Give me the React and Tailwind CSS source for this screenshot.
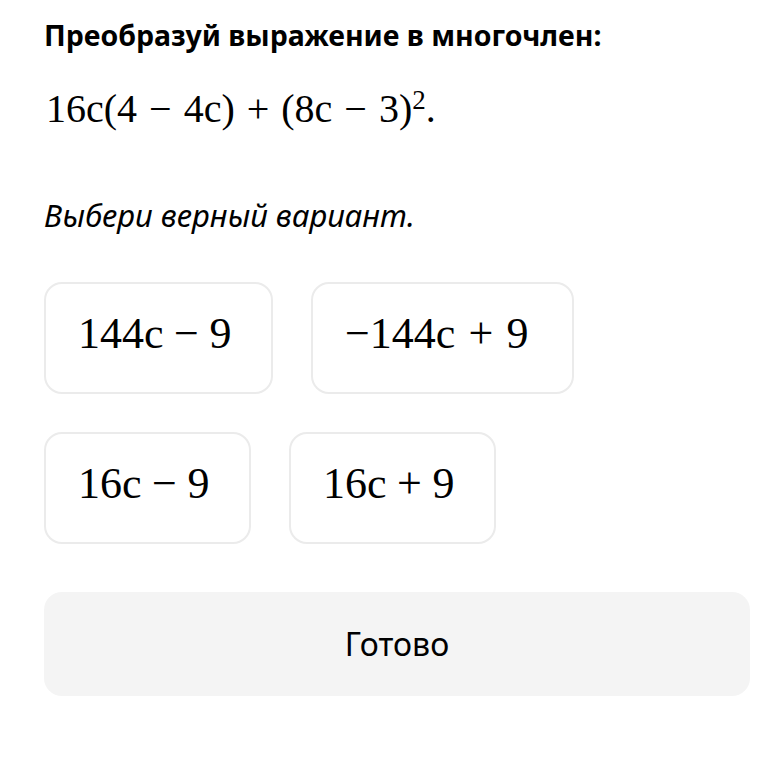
export default function App() {
  const sans = { fontFamily: '"Noto Sans", "Open Sans", sans-serif' };
  const math = { fontFamily: '"Liberation Serif", "DejaVu Serif", serif' };
  const Op = ({ c, m = "mx-[0.3em]" }) => <span className={m}>{c}</span>;
  const Card = ({ children, w }) => (
    <div className={`flex h-[112px] items-start rounded-[18px] border-2 border-[#ebebeb] bg-white pl-[32px] pt-[24px] ${w}`}>
      <span className="text-[44px] leading-[1.2] text-black" style={math}>{children}</span>
    </div>
  );
  return (
    <div className="min-h-[763px] w-[773px] bg-white text-black">
      <div className="px-[44px] pt-[17px]">
        <h1 className="text-[28.5px] font-bold leading-[1.3]" style={sans}>Преобразуй выражение в многочлен:</h1>
        <div className="mt-[29px] pl-[2px] text-[40px] leading-[1.3]" style={math}>
          16c(4<Op c="−" />4c)<Op c="+" />(8c<Op c="−" />3)<sup className="text-[27px] leading-none">2</sup>.
        </div>
        <p className="mt-[60px] text-[31px] italic leading-[1.3]" style={sans}>Выбери верный вариант.</p>
        <div className="mt-[47px] flex flex-col gap-[38px]">
          <div className="flex gap-[38px]">
            <Card w="w-[229px]">144c<Op c="−" m="mx-[0.24em]" />9</Card>
            <Card w="w-[263px]">−144c<Op c="+" />9</Card>
          </div>
          <div className="flex gap-[38px]">
            <Card w="w-[207px]">16c<Op c="−" m="mx-[0.24em]" />9</Card>
            <Card w="w-[207px]">16c<Op c="+" m="mx-[0.24em]" />9</Card>
          </div>
        </div>
        <button className="mt-[48px] flex h-[104px] w-[706px] items-center justify-center rounded-[18px] bg-[#f4f4f4] text-[32px] text-black" style={sans}>
          Готово
        </button>
      </div>
    </div>
  );
}
